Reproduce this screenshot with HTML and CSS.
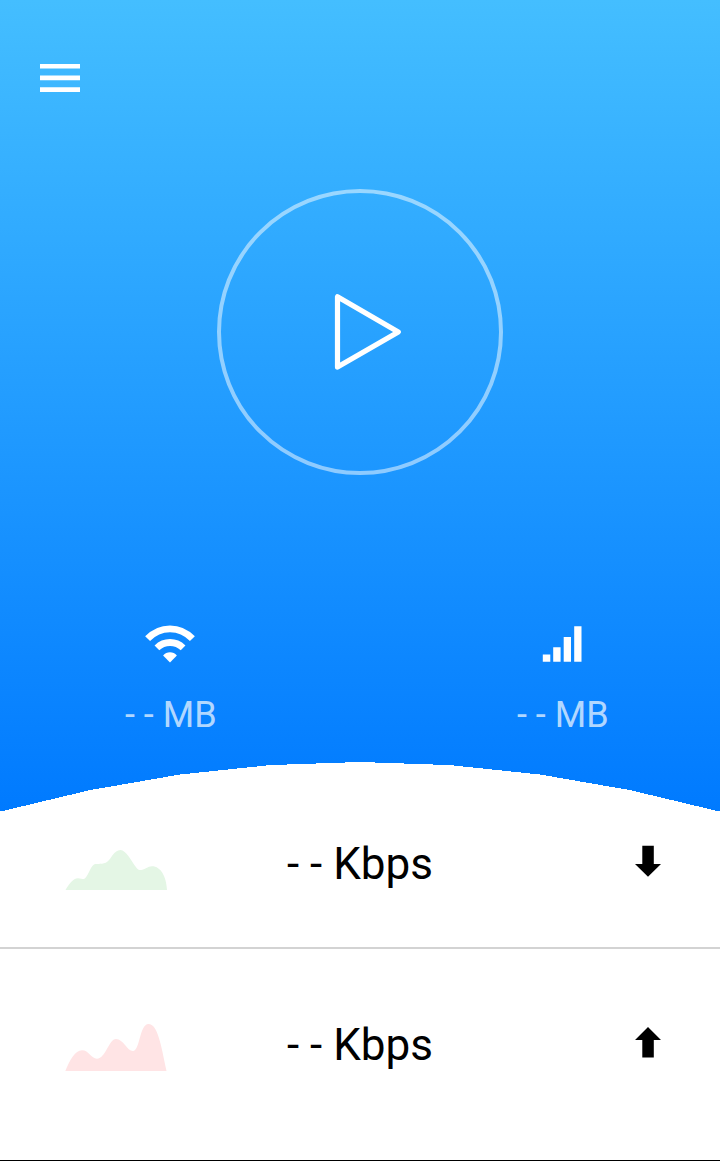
FILE: index.html
```html
<!DOCTYPE html>
<html lang="en">
<head>
<meta charset="utf-8">
<title>Speed test</title>
<link rel="stylesheet" href="styles.css">
</head>
<body>
<main class="app">
  <section class="hero">
    <button class="menu" aria-label="Menu">
      <svg width="40" height="28" viewBox="0 0 40 28" fill="#fff"><path d="M0 0h40v4.600H0zM0 11.500h40v4.700H0zM0 23.300h40V28H0z"/></svg>
    </button>
    <button class="start" aria-label="Start test">
      <svg width="286" height="286" viewBox="0 0 286 286" fill="none">
        <circle cx="143" cy="143" r="141" stroke="#fff" stroke-opacity=".5" stroke-width="4"/>
        <path d="M120.500 107.700v70.400l60.800-35.200z" stroke="#fff" stroke-width="5.200" stroke-linejoin="round"/>
      </svg>
    </button>
    <div class="stats">
      <div class="stat">
        <svg class="stat-icon" width="52" height="38" viewBox="0 0 52 38" fill="none" stroke="#fff" stroke-width="6.800">
          <path d="M3.600 13.700Q13 3.800 26 3.800t22.400 9.900M12.900 22.900Q18.500 17.500 26 17.500t13.100 5.400"/>
          <path d="M26 37.400L19.100 30.500Q22 27.300 26 27.300t6.900 3.200z" fill="#fff" stroke="none"/>
        </svg>
        <span class="stat-text">- - MB</span>
      </div>
      <div class="stat">
        <svg class="stat-icon" width="40" height="38" viewBox="0 0 40 38" fill="#fff"><path d="M.8 29.400h7.500v7.400H.8zM11.200 22.300h7.400v14.500h-7.400zM21.700 12.100H29v24.700h-7.300zM32.200 1.300h7.300v35.500h-7.300z"/></svg>
        <span class="stat-text">- - MB</span>
      </div>
    </div>
    <svg class="arc" width="720" height="50" viewBox="0 0 720 50" shape-rendering="crispEdges"><path d="M0 50V49.600L90 28.100 180 12.500 270 3.100 360 0 450 3.100 540 12.500 630 28.100 720 49.600V50z" fill="#fff"/></svg>
  </section>
  <section class="row row-down">
    <svg class="chart" width="102" height="42" viewBox="0 0 102 42"><path d="M.5 41C4 35 8 29.200 13 29.200c2.500 0 4 .8 6 .8C23 28 25 18 29 15.500c3-1.500 9 .8 13.500-3C46 10 49 1 55.500 1 61 1 67 13 70.500 17.500c1.800 3 3.500 3.500 5.500 3.500 4 0 6.500-3.700 11-3.700C96 17.300 101.500 28 102 41z" fill="#e4f6e5"/></svg>
    <span class="speed">- - Kbps</span>
    <svg class="arrow" width="28" height="32" viewBox="0 0 28 32"><path d="M8.300.7h11.500V19H27L14 31.800 1 19h7.300z"/></svg>
  </section>
  <section class="row row-up">
    <svg class="chart" width="102" height="49" viewBox="0 0 102 49"><path d="M.3 48C5 37 10 27.300 17 27.300c7 0 9 8.400 15 8.400 8.500 0 12-19.700 19-19.700 7.500 0 11 12 17 12C75 28 74.500 1 83.500 1c9 0 12.500 20 18 47z" fill="#ffe4e5"/></svg>
    <span class="speed">- - Kbps</span>
    <svg class="arrow" width="28" height="32" viewBox="0 0 28 32"><path d="M14 0L27 13h-7.200v17.600H8.300V13H1z"/></svg>
  </section>
</main>
</body>
</html>
```
FILE: styles.css
```css
* { box-sizing: border-box; }
body { margin: 0; font-family: Roboto, sans-serif; background: #fff; }
svg { display: block; }
button { padding: 0; border: 0; background: none; }

.app {
  display: flex;
  flex-direction: column;
  width: 720px;
  height: 1161px;
  border-bottom: 1px solid #000;
}

.hero {
  display: flex;
  flex-direction: column;
  height: 812px;
  padding-top: 64px;
  background: linear-gradient(#44beff, #007aff);
}
.menu { align-self: flex-start; margin-left: 40px; }
.start { align-self: center; margin-top: 97px; border-radius: 50%; }

.stats {
  display: flex;
  justify-content: space-between;
  margin-top: 150px;
  padding: 0 108px 0 120px;
}
.stat {
  display: flex;
  flex-direction: column;
  align-items: center;
  gap: 31px;
  width: 100px;
}
.stat-text {
  padding-left: 1.5px;
  font-size: 36px;
  line-height: 42px;
  white-space: nowrap;
  color: rgba(255, 255, 255, .7);
}
.arc { margin-top: auto; }

.row {
  display: grid;
  grid-template-columns: 102px 1fr 109px;
  align-items: start;
  padding: 0 58px 0 65px;
}
.row-down { height: 137px; padding-top: 26px; border-bottom: 2px solid #d3d3d3; }
.row-up { flex: 1; padding-top: 70px; }
.row-down .chart { margin-top: 11px; }
.row-up .chart { margin-top: 4px; }
.arrow { justify-self: end; }
.row-down .arrow { margin-top: 7px; }
.row-up .arrow { margin-top: 8px; }
.speed {
  font-size: 44px;
  line-height: 52px;
  text-align: center;
  color: #000;
}
```
